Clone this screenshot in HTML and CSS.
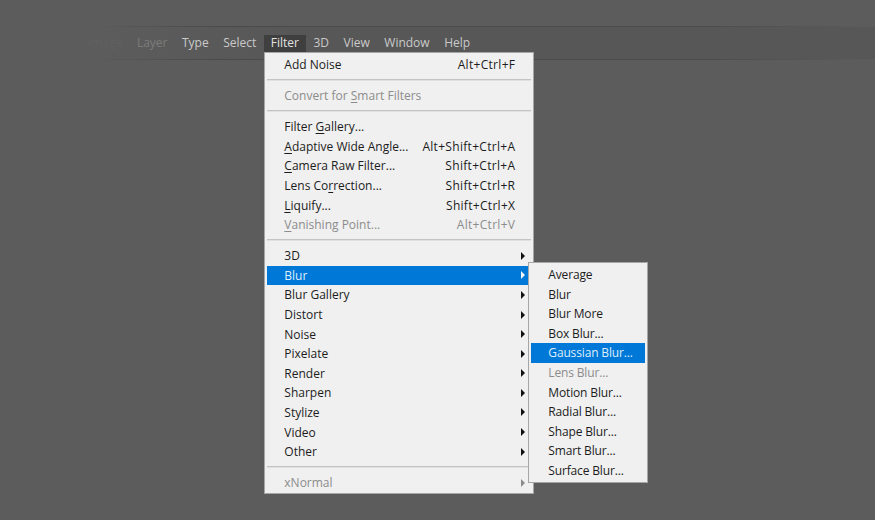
FILE: index.html
```html
<!DOCTYPE html>
<html>
<head>
    <title>Filter menu</title>
    <link rel="stylesheet" href="styles.css">
</head>
<body>
    <div class="menubar">
        <div class="bar-item fade-2">Image</div>
        <div class="bar-item fade-1">Layer</div>
        <div class="bar-item">Type</div>
        <div class="bar-item">Select</div>
        <div class="bar-item open">Filter
            <div class="menu">
                <div class="row"><span>Add Noise</span><span class="keys">Alt+Ctrl+F</span></div>
                <div class="sep"></div>
                <div class="row off"><span>Convert for <u>S</u>mart Filters</span></div>
                <div class="sep"></div>
                <div class="row"><span>Filter <u>G</u>allery...</span></div>
                <div class="row"><span><u>A</u>daptive Wide Angle...</span><span class="keys">Alt+Shift+Ctrl+A</span></div>
                <div class="row"><span><u>C</u>amera Raw Filter...</span><span class="keys">Shift+Ctrl+A</span></div>
                <div class="row"><span>Lens Co<u>r</u>rection...</span><span class="keys">Shift+Ctrl+R</span></div>
                <div class="row"><span><u>L</u>iquify...</span><span class="keys">Shift+Ctrl+X</span></div>
                <div class="row off"><span><u>V</u>anishing Point...</span><span class="keys">Alt+Ctrl+V</span></div>
                <div class="sep"></div>
                <div class="row more"><span>3D</span></div>
                <div class="row more active"><span>Blur</span>
                    <div class="menu submenu">
                        <div class="row"><span>Average</span></div>
                        <div class="row"><span>Blur</span></div>
                        <div class="row"><span>Blur More</span></div>
                        <div class="row"><span>Box Blur...</span></div>
                        <div class="row active"><span>Gaussian Blur...</span></div>
                        <div class="row off"><span>Lens Blur...</span></div>
                        <div class="row"><span>Motion Blur...</span></div>
                        <div class="row"><span>Radial Blur...</span></div>
                        <div class="row"><span>Shape Blur...</span></div>
                        <div class="row"><span>Smart Blur...</span></div>
                        <div class="row"><span>Surface Blur...</span></div>
                    </div>
                </div>
                <div class="row more"><span>Blur Gallery</span></div>
                <div class="row more"><span>Distort</span></div>
                <div class="row more"><span>Noise</span></div>
                <div class="row more"><span>Pixelate</span></div>
                <div class="row more"><span>Render</span></div>
                <div class="row more"><span>Sharpen</span></div>
                <div class="row more"><span>Stylize</span></div>
                <div class="row more"><span>Video</span></div>
                <div class="row more"><span>Other</span></div>
                <div class="sep"></div>
                <div class="row more off"><span>xNormal</span></div>
            </div>
        </div>
        <div class="bar-item">3D</div>
        <div class="bar-item">View</div>
        <div class="bar-item">Window</div>
        <div class="bar-item">Help</div>
    </div>
</body>
</html>
```

FILE: styles.css
```css
body {
    margin: 0;
    width: 875px;
    height: 520px;
    overflow: hidden;
    background-color: #5c5c5c;
    font-family: "Open Sans", "Noto Sans", sans-serif;
    font-size: 12px;
    color: #1c1c1c;
}
.menubar {
    display: flex;
    align-items: flex-start;
    box-sizing: border-box;
    height: 34px;
    margin-top: 26px;
    padding: 8px 0 0 81px;
    border-top: 1px solid #4a4a4a;
    border-bottom: 1px solid #4e4e4e;
    border-image: linear-gradient(to right, #5c5c5c 90px, #4a4a4a 220px, #4c4c4c 700px, #5c5c5c) 1;
    background: linear-gradient(to right, #5c5c5c 100px, #575757 300px);
}
.bar-item {
    position: relative;
    box-sizing: border-box;
    height: 17px;
    padding: 0 7px;
    margin-right: 0.5px;
    line-height: 15px;
    color: #cacaca;
    white-space: nowrap;
}
.bar-item.fade-1 {
    color: #7c7c7c;
}
.bar-item.fade-2 {
    color: #606060;
}
.bar-item.open {
    background-color: #3f3f3f;
    color: #e2e2e2;
}
.menu {
    position: absolute;
    top: 17px;
    left: 0.5px;
    z-index: 1;
    box-sizing: border-box;
    width: 270px;
    height: 442px;
    padding: 1.7px 2px 2px;
    border: 1px solid #a6a6a6;
    background-color: #f0f0f0;
    color: #1c1c1c;
    line-height: normal;
}
.row {
    position: relative;
    display: flex;
    justify-content: space-between;
    align-items: center;
    box-sizing: border-box;
    height: 19.6px;
    padding: 0 16px 0 17px;
}
.keys {
    letter-spacing: 0.3px;
}
.row u {
    text-underline-offset: 2px;
}
.row.off {
    color: #8c8c8c;
}
.row.active {
    background-color: #0078d7;
    color: #dfeefb;
}
.row.more::after {
    content: "";
    border-left: 4px solid #111;
    border-top: 4px solid transparent;
    border-bottom: 4px solid transparent;
    margin-right: -9.5px;
}
.row.more.off::after {
    border-left-color: #8c8c8c;
}
.row.more.active::after {
    border-left-color: #f4f4f4;
}
.sep {
    box-sizing: border-box;
    height: 2px;
    margin: 5px 0 4.5px;
    border-top: 1px solid #c4c4c4;
    background-color: #e0e0e0;
}
.submenu {
    top: -3.4px;
    left: calc(100% - 3px);
    width: 120px;
    height: 221px;
    padding: 1.5px 2px;
    z-index: 2;
    letter-spacing: -0.15px;
}
```
